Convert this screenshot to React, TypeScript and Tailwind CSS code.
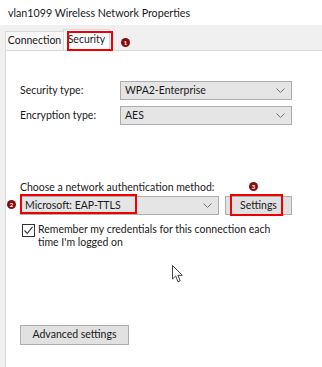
import React from "react";

// Windows-style "Wireless Network Properties" dialog, Security tab,
// annotated with red callout boxes and numbered badges.

function Badge({ n, className }: { n: number; className: string }) {
  return (
    <span
      className={`absolute w-[9px] h-[9px] rounded-full bg-[#8a0b0b] text-white text-[6px] leading-[9px] text-center font-bold ${className}`}
    >
      {n}
    </span>
  );
}

function Chevron() {
  return (
    <svg width="9" height="5" viewBox="0 0 9 5" className="shrink-0">
      <path d="M0.5 0.5 L4.5 4.5 L8.5 0.5" fill="none" stroke="#707070" strokeWidth="1" />
    </svg>
  );
}

function Select({ value, className }: { value: string; className: string }) {
  return (
    <div
      className={`h-[19px] flex items-center justify-between pl-[4px] pr-[6px] bg-[#e5e5e5] border border-[#adadad] ${className}`}
    >
      <span>{value}</span>
      <Chevron />
    </div>
  );
}

function Cursor() {
  return (
    <svg width="12" height="18" viewBox="0 0 12 18" className="absolute left-[172px] top-[265px]">
      <path
        d="M0.5 0.5 L0.5 14 L3.7 11 L6 16.8 L8.2 15.8 L5.9 10.3 L10.3 10.3 Z"
        fill="white"
        stroke="#444"
        strokeWidth="1"
        strokeLinejoin="round"
      />
    </svg>
  );
}

export default function App() {
  return (
    <div
      className="relative w-[322px] h-[367px] overflow-hidden bg-white text-[10.5px] text-[#1a1a1a] flex flex-col"
      style={{ fontFamily: 'Lato, "Noto Sans", sans-serif' }}
    >
      <div className="h-[25px] shrink-0 pl-[8px] pt-[4px] text-[10.7px] leading-[17px]">
        vlan1099 Wireless Network Properties
      </div>

      <div className="flex-1 flex flex-col bg-[#f0f0f0]">
        {/* tab strip */}
        <div className="h-[25px] shrink-0 flex items-end pl-[5px]">
          <div className="h-[19px] w-[59px] flex items-center justify-center bg-[#f7f7f7] border border-b-0 border-[#d9d9d9]">
            Connection
          </div>
          <div className="h-[21px] w-[47px] flex items-center justify-center bg-white border border-b-0 border-[#d9d9d9] -ml-px">
            Security
          </div>
        </div>

        {/* panel */}
        <div className="flex-1 ml-[5px] bg-white border-l border-t border-[#d9d9d9] pl-[14px] flex flex-col">
          <div className="mt-[30px] flex items-center">
            <span className="w-[100px]">Security type:</span>
            <Select value="WPA2-Enterprise" className="w-[172px]" />
          </div>
          <div className="mt-[6px] flex items-center">
            <span className="w-[100px]">Encryption type:</span>
            <Select value="AES" className="w-[172px]" />
          </div>

          <div className="mt-[55px] leading-[15px]">Choose a network authentication method:</div>
          <div className="mt-[1px] flex items-center gap-[6px]">
            <Select value="Microsoft: EAP-TTLS" className="w-[199px]" />
            <button className="w-[67px] h-[19px] bg-[#e1e1e1] border border-[#adadad]">Settings</button>
          </div>

          <div className="mt-[8px] flex items-start gap-[3px] pl-[2px]">
            <span className="w-[13px] h-[13px] mt-[1px] shrink-0 border border-[#333] flex items-center justify-center">
              <svg width="11" height="11" viewBox="0 0 11 11">
                <path d="M1.5 5.5 L4.3 8.5 L9.5 1.8" fill="none" stroke="#333" strokeWidth="1.1" />
              </svg>
            </span>
            <span className="leading-[13px] whitespace-nowrap">
              Remember my credentials for this connection each
              <br />
              time I&apos;m logged on
            </span>
          </div>

          <button className="mt-[76px] w-[109px] h-[20px] bg-[#e1e1e1] border border-[#adadad] text-center">
            Advanced settings
          </button>
        </div>
      </div>

      {/* annotations */}
      <div className="absolute left-[67px] top-[31px] w-[46px] h-[20px] border-2 border-[#f00000]" />
      <div className="absolute left-[20px] top-[194px] w-[117px] h-[20px] border-2 border-[#f00000]" />
      <div className="absolute left-[230px] top-[194px] w-[53px] h-[22px] border-2 border-[#f00000]" />
      <Badge n={1} className="left-[121px] top-[38px]" />
      <Badge n={2} className="left-[7px] top-[200px]" />
      <Badge n={3} className="left-[249px] top-[182px]" />
      <Cursor />
    </div>
  );
}
